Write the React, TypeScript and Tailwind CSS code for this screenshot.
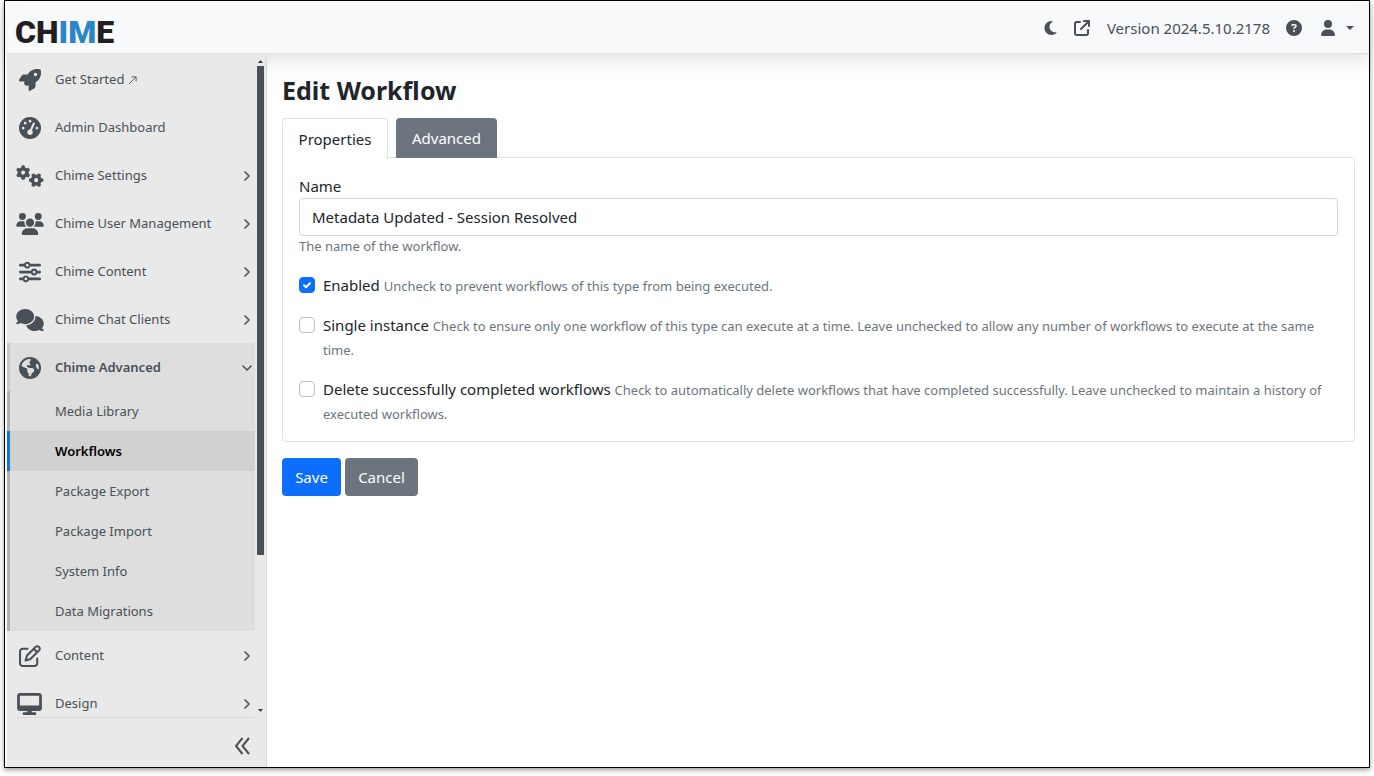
import { useState } from "react";
import clsx from "clsx";
import {
  FaRocket,
  FaGaugeHigh,
  FaGears,
  FaUsers,
  FaSliders,
  FaComments,
  FaEarthAmericas,
  FaRegPenToSquare,
  FaDesktop,
  FaMoon,
  FaUser,
  FaCircleQuestion,
  FaArrowUpRightFromSquare,
} from "react-icons/fa6";

const menu = [
  { icon: FaRocket, label: "Get Started", external: true, size: "size-[22px]" },
  { icon: FaGaugeHigh, label: "Admin Dashboard", size: "size-[22px]" },
  { icon: FaGears, label: "Chime Settings", size: "h-[22px] w-7", children: [] },
  { icon: FaUsers, label: "Chime User Management", size: "h-[22px] w-7", children: [] },
  { icon: FaSliders, label: "Chime Content", size: "size-[22px]", children: [] },
  { icon: FaComments, label: "Chime Chat Clients", size: "h-[22px] w-7", children: [] },
  {
    icon: FaEarthAmericas,
    label: "Chime Advanced",
    size: "size-[22px]",
    children: [
      "Media Library",
      "Workflows",
      "Package Export",
      "Package Import",
      "System Info",
      "Data Migrations",
    ],
  },
  { icon: FaRegPenToSquare, label: "Content", size: "size-[22px]", children: [] },
  { icon: FaDesktop, label: "Design", size: "h-[22px] w-[25px]", children: [] },
];

const options = [
  {
    id: "enabled",
    label: "Enabled",
    hint: "Uncheck to prevent workflows of this type from being executed.",
    checked: true,
  },
  {
    id: "singleton",
    label: "Single instance",
    hint: "Check to ensure only one workflow of this type can execute at a time. Leave unchecked to allow any number of workflows to execute at the same time.",
    checked: false,
  },
  {
    id: "delete-finished",
    label: "Delete successfully completed workflows",
    hint: "Check to automatically delete workflows that have completed successfully. Leave unchecked to maintain a history of executed workflows.",
    checked: false,
  },
];

function Chevron({ open }: { open?: boolean }) {
  return (
    <svg
      viewBox="0 0 12 12"
      className={clsx("size-3 shrink-0", open && "rotate-90")}
      fill="none"
      stroke="currentColor"
      strokeWidth="1.5"
    >
      <path d="M3.500 1.500 8 6l-4.500 4.500" />
    </svg>
  );
}

function TopBar() {
  return (
    <header className="relative z-10 flex h-[52px] shrink-0 items-center justify-between border-b border-[#dfe0e2] bg-[#f8f9fb] pr-[15px] pl-2 text-[#495057] shadow-[0_8px_16px_rgba(0,0,0,0.1)]">
      <a href="#" className="pt-2 font-[Roboto] text-[32px] leading-8 font-black text-[#231f20]">
        CH<span className="text-[#2a86c8]">IM</span>E
      </a>
      <div className="flex items-center pt-px">
        <button aria-label="Toggle theme">
          <FaMoon className="h-4 w-[13px]" />
        </button>
        <a href="#" aria-label="Visit site" className="ml-[17px]">
          <FaArrowUpRightFromSquare className="size-4" />
        </a>
        <span className="ml-[17px] text-[15px]">Version 2024.5.10.2178</span>
        <button aria-label="Help" className="ml-4">
          <FaCircleQuestion className="size-4" />
        </button>
        <button aria-label="Account" className="ml-[19px] flex items-center gap-[11px]">
          <FaUser className="h-4 w-[14px]" />
          <svg viewBox="0 0 8 4" className="h-1 w-2" fill="currentColor">
            <path d="M0 0h8L4 4z" />
          </svg>
        </button>
      </div>
    </header>
  );
}

function Sidebar() {
  return (
    <aside className="relative z-20 flex w-[260px] shrink-0 flex-col border-r border-[#d9d9d9] bg-[#e9e9e9] text-[#495057]">
      <div className="flex min-h-0 flex-1 pt-px">
        <nav className="flex-1 overflow-hidden">
          <ul>
            {menu.map((item) => {
              const open = !!item.children?.length;
              return (
                <li key={item.label} className={clsx(open && "bg-[#dedede]")}>
                  <a
                    href="#"
                    className={clsx(
                      "flex h-12 items-center border-l-3 pt-[2px] pr-[2px]",
                      open ? "border-[#c8c8c8] font-semibold" : "border-transparent"
                    )}
                  >
                    <span className="mr-[7px] flex w-[38px] justify-center pl-px">
                      <item.icon className={item.size} />
                    </span>
                    <span className="flex flex-1 items-center gap-1 text-[13px]">
                      {item.label}
                      {item.external && (
                        <svg viewBox="0 0 10 10" className="size-[9px]" fill="none" stroke="currentColor">
                          <path d="M1 9 9 1M4 1h5v5" />
                        </svg>
                      )}
                    </span>
                    {item.children && <Chevron open={open} />}
                  </a>
                  {open && (
                    <ul>
                      {item.children?.map((child) => (
                        <li key={child}>
                          <a
                            href="#"
                            className={clsx(
                              "flex h-10 items-center border-l-3 pt-[2px] pl-[45px] text-[13px]",
                              child === "Workflows"
                                ? "border-[#0a7bd4] bg-[#d1d1d1] font-semibold text-black"
                                : "border-[#b1b1b1]"
                            )}
                          >
                            {child}
                          </a>
                        </li>
                      ))}
                    </ul>
                  )}
                </li>
              );
            })}
          </ul>
        </nav>
        {/* scroll track */}
        <div className="flex w-[11px] flex-col items-center py-[5px]">
          <svg viewBox="0 0 5 3" className="mb-[3px] h-[3px] w-[5px] shrink-0" fill="#343a40">
            <path d="M0 3h5L2.500 0z" />
          </svg>
          <div className="flex-1 self-stretch pl-[2px]">
            <div className="h-[76%] w-[7px] bg-[#495057]" />
          </div>
          <svg viewBox="0 0 5 3" className="h-[3px] w-[5px] shrink-0" fill="#343a40">
            <path d="M0 0h5L2.500 3z" />
          </svg>
        </div>
      </div>
      <div className="mr-[11px] ml-[10px] flex h-[50px] items-center justify-end border-t border-[#d9d9d9] pt-[6px] pr-[5px]">
        <button aria-label="Collapse menu">
          <svg viewBox="0 0 16 18" className="h-[18px] w-4" fill="none" stroke="currentColor" strokeWidth="2">
            <path d="M8.500 1 2 9l6.500 8M15 1 8.500 9l6.500 8" />
          </svg>
        </button>
      </div>
    </aside>
  );
}

function EditWorkflow() {
  const [name, setName] = useState("Metadata Updated - Session Resolved");

  return (
    <main className="flex-1 pt-5 pr-[14px] pl-[15px] text-[#212529]">
      <h1 className="mb-3 text-[25px] leading-8 font-bold">Edit Workflow</h1>
      <div role="tablist" className="flex gap-2 text-[15px]">
        <button
          role="tab"
          aria-selected="true"
          className="relative -mb-px h-[41px] w-[106px] rounded-t border border-b-0 border-[#dee2e6] bg-white pt-px"
        >
          Properties
        </button>
        <button role="tab" aria-selected="false" className="h-10 w-[101px] rounded-t bg-[#6c757d] text-white">
          Advanced
        </button>
      </div>
      <form>
        <div className="-mt-px space-y-4 rounded rounded-tl-none border border-[#dee2e6] p-4">
          <div>
            <label htmlFor="name" className="block text-[15px] leading-6">
              Name
            </label>
            <input
              id="name"
              type="text"
              value={name}
              onChange={(e) => setName(e.target.value)}
              className="block h-[38px] w-full rounded border border-[#ced4da] bg-white px-3 text-[15px]"
            />
            <p className="text-[13px] leading-[21px] text-[#6c757d]">The name of the workflow.</p>
          </div>
          {options.map((option) => (
            <div key={option.id} className="flex gap-2">
              <span className="relative mt-1 size-4 shrink-0">
                <input
                  id={option.id}
                  type="checkbox"
                  defaultChecked={option.checked}
                  className="peer block size-4 appearance-none rounded border border-[#bfbfbf] bg-white checked:border-[#0d6efd] checked:bg-[#0d6efd]"
                />
                <svg
                  viewBox="0 0 16 16"
                  className="pointer-events-none absolute inset-0 hidden peer-checked:block"
                  fill="none"
                  stroke="white"
                  strokeWidth="2"
                  strokeLinecap="round"
                  strokeLinejoin="round"
                >
                  <path d="m5 8.200 2 2 4-4" />
                </svg>
              </span>
              <label htmlFor={option.id} className="text-[15px] leading-6">
                {option.label} <span className="text-[13px] leading-5 text-[#6c757d]">{option.hint}</span>
              </label>
            </div>
          ))}
        </div>
        <div className="mt-4 flex gap-1 text-[15px] text-white">
          <button type="button" className="h-[38px] w-[59px] rounded bg-[#0d6efd]">
            Save
          </button>
          <button type="button" className="h-[38px] w-[73px] rounded bg-[#6c757d]">
            Cancel
          </button>
        </div>
      </form>
    </main>
  );
}

export default function App() {
  return (
    <div className="h-screen bg-white pr-1 pb-2 pl-1 font-['Noto_Sans','Open_Sans',sans-serif]">
      <div className="flex h-full flex-col border border-black pt-px pl-[2px] shadow-[0_2px_5px_rgba(0,0,0,0.4)]">
        <TopBar />
        <div className="flex min-h-0 flex-1">
          <Sidebar />
          <EditWorkflow />
        </div>
      </div>
    </div>
  );
}
